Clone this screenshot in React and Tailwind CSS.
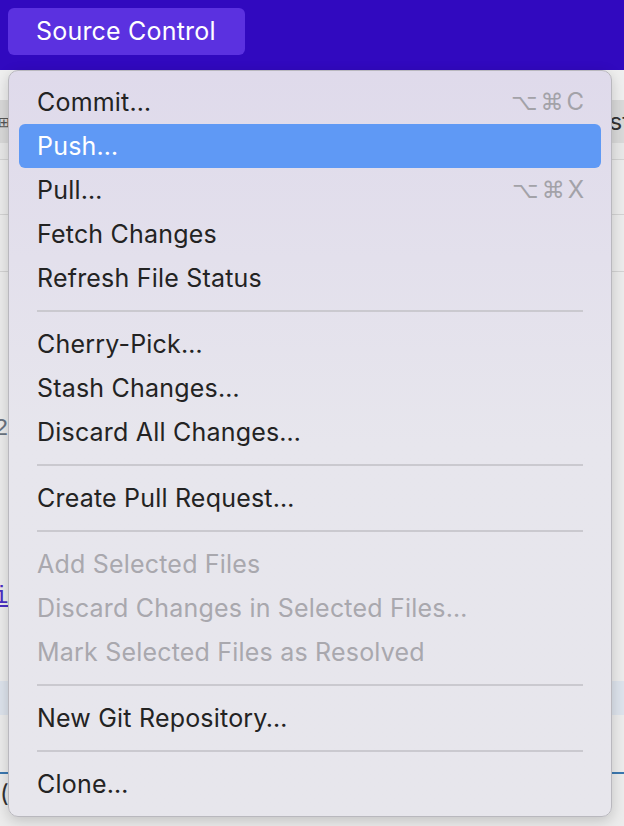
import React from 'react';

const groups = [
  [
    { label: 'Commit…', shortcut: ['⌥', '⌘', 'C'] },
    { label: 'Push…', active: true },
    { label: 'Pull…', shortcut: ['⌥', '⌘', 'X'] },
    { label: 'Fetch Changes' },
    { label: 'Refresh File Status' },
  ],
  [{ label: 'Cherry-Pick…' }, { label: 'Stash Changes…' }, { label: 'Discard All Changes…' }],
  [{ label: 'Create Pull Request…' }],
  [
    { label: 'Add Selected Files', disabled: true },
    { label: 'Discard Changes in Selected Files…', disabled: true },
    { label: 'Mark Selected Files as Resolved', disabled: true },
  ],
  [{ label: 'New Git Repository…' }],
  [{ label: 'Clone…' }],
];

function MenuItem({ item }) {
  let color = 'text-[#232323]';
  if (item.active) color = 'text-white';
  if (item.disabled) color = 'text-[#a9a8ae]';
  return (
    <div
      className={`mx-[10px] h-[44px] flex items-center justify-between pl-[18px] pr-[17px] rounded-[6px] ${
        item.active ? 'bg-[#5f99f5]' : ''
      } ${color}`}
    >
      <span className="text-[25px] tracking-[0.2px] leading-none pt-[1px]">{item.label}</span>
      {item.shortcut && (
        <span className="flex items-center gap-[3px] text-[24px] leading-none text-[#a3a2a8]">
          {item.shortcut.map((k, i) => (
            <span key={i} className={i < 2 ? "font-['DejaVu_Sans',sans-serif] text-[23px]" : ''}>
              {k}
            </span>
          ))}
        </span>
      )}
    </div>
  );
}

function Background() {
  return (
    <div className="flex flex-col h-[826px] bg-[#ececec]">
      <div className="h-[70px] bg-[#3109bf] shrink-0 px-[8px] pt-[8px]">
        <div className="w-[237px] h-[47px] rounded-[6px] bg-[#5b31e0] flex items-center pl-[28px] text-white text-[25px] tracking-[0.2px]">
          Source Control
        </div>
      </div>
      <div className="h-[30px] shrink-0 bg-[#efefef]" />
      <div className="h-[43px] shrink-0 bg-[#d9d9d9] flex justify-between items-center text-[22px] text-[#555]">
        <span className="-ml-[2px] text-[14px]">⊞</span>
        <span className="mr-[-6px] text-[#333] text-[24px]">st</span>
      </div>
      <div className="h-[17px] shrink-0 bg-[#e8e8e8] border-b border-[#d3d3d3]" />
      <div className="h-[55px] shrink-0 bg-[#ececec] border-b border-[#d3d3d3]" />
      <div className="h-[57px] shrink-0 bg-[#ececec] border-b border-[#d3d3d3]" />
      <div className="h-[172px] shrink-0 bg-[#ececec] flex items-end text-[#6a7480] text-[24px] font-['Liberation_Mono',monospace]">
        <span className="-ml-[6px] leading-[30px]">2</span>
      </div>
      <div className="h-[237px] shrink-0 bg-[#ececec] pt-[135px] text-[#4a2fc2] text-[24px] font-['Liberation_Mono',monospace]">
        <span className="-ml-[6px] underline leading-[30px]">i</span>
      </div>
      <div className="h-[34px] shrink-0 bg-[#dde3ec]" />
      <div className="h-[59px] shrink-0 bg-[#ececec] border-b-2 border-[#3b78b0]" />
      <div className="flex-1 bg-[#ececec] text-[24px] text-[#333] leading-[40px]">
        <span>(</span>
      </div>
    </div>
  );
}

export default function App() {
  return (
    <div className="relative w-[624px] h-[826px] overflow-hidden font-['Inter','Liberation_Sans',sans-serif]">
      <Background />
      <div className="absolute left-[8px] top-[70px] w-[604px] rounded-[10px] border border-[#b9b8be] bg-gradient-to-b from-[#dfdaeb] via-[#e7e6ed] to-[#e7e6ec] shadow-[0_4px_14px_rgba(0,0,0,0.18)] pt-[9px] pb-[10px]">
        {groups.map((g, gi) => (
          <div key={gi}>
            {gi > 0 && (
              <div className="h-[22px] flex items-center px-[28px]">
                <div className="h-[2px] w-full bg-[#cac9cf]" />
              </div>
            )}
            {g.map((item, ii) => (
              <MenuItem key={ii} item={item} />
            ))}
          </div>
        ))}
      </div>
    </div>
  );
}
